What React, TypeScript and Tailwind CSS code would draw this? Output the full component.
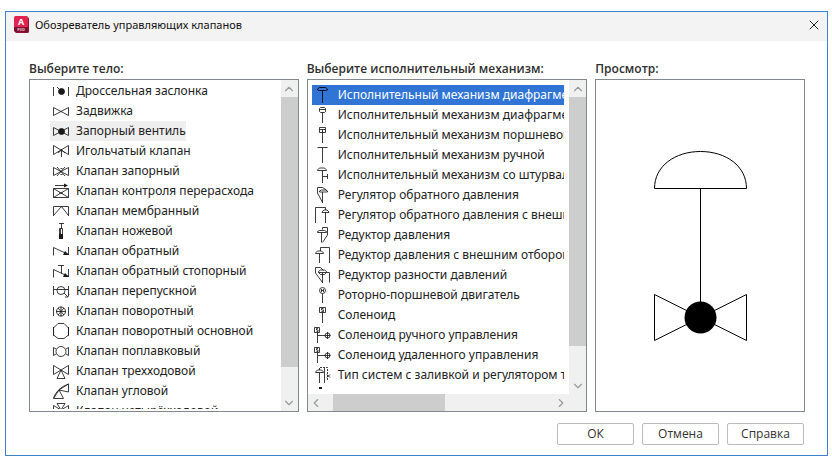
import { useState, type ReactNode } from "react";
import { ChevronDown, ChevronLeft, ChevronRight, ChevronUp, X } from "lucide-react";
import clsx from "clsx";

type Item = {
  label: string;
  icon: ReactNode;
};

const bodies: Item[] = [
  {
    label: "Дроссельная заслонка",
    icon: (
      <>
        <path d="M3.5 6v9M18.5 6v9M7 6l2 2" />
        <circle cx="11.5" cy="10.5" r="3" fill="currentColor" />
      </>
    ),
  },
  { label: "Задвижка", icon: <path d="M3.5 6.5v8l15-8v8z" /> },
  {
    label: "Запорный вентиль",
    icon: (
      <>
        <path d="M3.5 6.5v8l15-8v8z" />
        <circle cx="11.5" cy="10.5" r="3" fill="currentColor" />
      </>
    ),
  },
  {
    label: "Игольчатый клапан",
    icon: <path d="M3.5 4.5v9l15-9v9zM11.5 8v8M8 12l3.5-3 3.5 3" />,
  },
  {
    label: "Клапан запорный",
    icon: <path d="M3.5 6.5v8l15-8v8zM7 6l8 9M15 6l-8 9M10.5 7.5h2M10.5 13.5h2" />,
  },
  {
    label: "Клапан контроля перерасхода",
    icon: (
      <>
        <path d="M3.5 7.5h15v9h-15zM3.5 7.5l15 9M18.5 7.5l-15 9M5 4.5h11M9 12h4" />
        <path d="M14 2.5l4 2-4 2z" fill="currentColor" stroke="none" />
      </>
    ),
  },
  { label: "Клапан мембранный", icon: <path d="M3.5 15V5.5h15V15M3.5 14.5l8-9 7 9" /> },
  {
    label: "Клапан ножевой",
    icon: (
      <>
        <path d="M9 2.5h5M11.5 2.5V8M9.5 7.5h3v10h-3zM10.5 7.5v10" />
        <path d="M9 13h4v5H9z" fill="currentColor" stroke="none" />
      </>
    ),
  },
  {
    label: "Клапан обратный",
    icon: (
      <>
        <path d="M3.5 14.5v-8l15 7M18.5 6v8" />
        <path d="M15 10l4 4h-6z" fill="currentColor" stroke="none" />
      </>
    ),
  },
  {
    label: "Клапан обратный стопорный",
    icon: (
      <>
        <path d="M3.5 16.5v-8l15 7M18.5 8v8M8 4.5h6M11.5 4.5v8" />
        <path d="M15 12l4 4h-6z" fill="currentColor" stroke="none" />
      </>
    ),
  },
  {
    label: "Клапан перепускной",
    icon: (
      <>
        <path d="M3.5 5v9M18.5 5v9M3.5 8.5h15M14 12l3.5 3.5M15 16h3l1-3" />
        <circle cx="11" cy="9.5" r="4" />
      </>
    ),
  },
  {
    label: "Клапан поворотный",
    icon: (
      <>
        <path d="M3.5 6v9M18.5 6v9M6 10.5h10M11 5.5v10M8 7l6 7M14 7l-6 7" />
        <circle cx="11" cy="10.5" r="4.5" />
      </>
    ),
  },
  {
    label: "Клапан поворотный основной",
    icon: <path d="M3.5 6v9M18.5 6v9M8 2.5h6L18.5 7v7L14 17.5H8L3.5 14V7z" />,
  },
  {
    label: "Клапан поплавковый",
    icon: (
      <>
        <path d="M6 8L3.5 6.5v8L6 13M16 8l2.5-1.5v8L16 13" />
        <circle cx="11" cy="10.5" r="5" />
      </>
    ),
  },
  { label: "Клапан трехходовой", icon: <path d="M3.5 4.5v9l15-9v9zM11 9l4 8.5H7z" /> },
  {
    label: "Клапан угловой",
    icon: <path d="M9 9l4.5 8.5h-10L9 9l9.5-6v8zM3.5 17Q7 7 18.5 3" />,
  },
  {
    label: "Клапан четырёхходовой",
    icon: <path d="M3.5 4.5v9l15-9v9zM11 9l4 8.5H7zM11 9l4-6.5H7z" />,
  },
];

const actuators: Item[] = [
  {
    label: "Исполнительный механизм диафрагменный",
    icon: <path d="M5.5 5V4l2-1.5h6l2 1.5v1l-2 .5h-6zM10.5 5.5V18" />,
  },
  {
    label: "Исполнительный механизм диафрагменный двойной",
    icon: <path d="M7.5 3.5l1-1h4l1 1v3l-1 1h-4l-1-1zM7.5 4.5h6M10.5 7.5V18" />,
  },
  {
    label: "Исполнительный механизм поршневой",
    icon: <path d="M7.5 2.5h6v5h-6zM7.5 4.5h6M10.5 4.5V18" />,
  },
  { label: "Исполнительный механизм ручной", icon: <path d="M5.5 2.5h10M10.5 2.5V18" /> },
  {
    label: "Исполнительный механизм со штурвалом",
    icon: <path d="M5.5 5.5V5l2-2h5l2 2v.5zM10.5 5.5V18M10.5 11.5h5M15.5 9v5" />,
  },
  {
    label: "Регулятор обратного давления",
    icon: <path d="M10.5 17.5L5.5 8V2.5h5l4 2.5M7.5 7V6l2-1h4l2 1v1zM10.5 7v11" />,
  },
  {
    label: "Регулятор обратного давления с внешним отбором",
    icon: <path d="M3.5 18V2.5h10V5M10 7.5V7l2-2h3l2 2v.5zM13.5 7.5V18" />,
  },
  {
    label: "Редуктор давления",
    icon: <path d="M10.5 17.5l5-7.5V2.5h-5v2M5.5 7.5v-1l2-1h5l2 1v1zM9.5 7.5v10" />,
  },
  {
    label: "Редуктор давления с внешним отбором",
    icon: <path d="M17.5 18V2.5h-9V6M3.5 8.5V8l2-2h4l2 2v.5zM7.5 8.5V18" />,
  },
  {
    label: "Редуктор разности давлений",
    icon: (
      <path d="M10.5 17.5L3.5 8V2.5h5l3 3M6.5 7.5v-1l2-1.5h4l2 1.5v1zM10.5 7.5V18M6.5 7.5l2 2h4l2-2h3v10" />
    ),
  },
  {
    label: "Роторно-поршневой двигатель",
    icon: (
      <>
        <circle cx="10.5" cy="5.5" r="3" />
        <path d="M9.5 4v3M11.5 4v3M9 5.5h3M10.5 8.5V18" />
      </>
    ),
  },
  {
    label: "Соленоид",
    icon: <path d="M7.5 2.5h6v5h-6zM11.5 3.5h-2v1.5h2v1.5h-2M10.5 7.5V18" />,
  },
  {
    label: "Соленоид ручного управления",
    icon: (
      <>
        <path d="M2.5 2.5h5v5h-5zM6 3.5H4.5v1.5H6v1.5H4.5M5.5 7.5V18M5.5 10.5h13M15.5 7v7" />
        <circle cx="15.5" cy="10.5" r="2.5" />
      </>
    ),
  },
  {
    label: "Соленоид удаленного управления",
    icon: (
      <>
        <path d="M2.5 2.5h5v5h-5zM6 3.5H4.5v1.5H6v1.5H4.5M5.5 7.5V18M5.5 10.5h13M15.5 7v7" />
        <circle cx="15.5" cy="10.5" r="2.5" />
      </>
    ),
  },
  {
    label: "Тип систем с заливкой и регулятором температуры",
    icon: (
      <>
        <path d="M3.5 7.5V7l2-2h4l2 2v.5zM7.5 7.5V18M12.5 3v15" />
        <path d="M7.5 5V2.5h8V16" strokeDasharray="2 1" />
        <path d="M15 9.5l3 3M18 9.5l-3 3" />
      </>
    ),
  },
  { label: "", icon: <path d="M7 2h3v2H7z" fill="currentColor" stroke="none" /> },
];

type ListProps = {
  items: Item[];
  selected: number;
  onSelect: (index: number) => void;
  strong?: boolean;
};

function ItemList({ items, selected, onSelect, strong }: ListProps) {
  return (
    <ul className="min-w-0 flex-1 overflow-hidden">
      {items.map((item, i) => (
        <li key={i} className="flex h-5">
          <button
            type="button"
            aria-pressed={i === selected}
            aria-label={item.label || "Точка"}
            onClick={() => onSelect(i)}
            className={clsx(
              "flex h-5 items-center gap-1.5 overflow-hidden whitespace-nowrap text-left",
              strong && "w-full",
              i === selected && (strong ? "bg-[#3075d6]" : "bg-[#efefef]"),
            )}
          >
            <svg
              viewBox="0 0 20 20"
              className={clsx(
                "size-5 shrink-0",
                strong && i === selected ? "text-black" : "text-[#1a1a1a]",
              )}
              fill="none"
              stroke="currentColor"
              strokeWidth="0.85"
              aria-hidden
            >
              {item.icon}
            </svg>
            <span className={strong && i === selected ? "text-white" : "text-[#222]"}>
              {item.label}
            </span>
          </button>
        </li>
      ))}
    </ul>
  );
}

const arrow = "flex size-[17px] shrink-0 items-center justify-center text-[#9a9a9a]";

function VerticalBar({ thumb }: { thumb: string }) {
  return (
    <div className="flex w-[17px] shrink-0 flex-col bg-[#f0f0f0]">
      <button type="button" aria-label="Вверх" className={arrow}>
        <ChevronUp className="size-3.5" />
      </button>
      <div className="min-h-0 flex-1">
        <div className={clsx("bg-[#cdcdcd]", thumb)} />
      </div>
      <button type="button" aria-label="Вниз" className={arrow}>
        <ChevronDown className="size-3.5" />
      </button>
    </div>
  );
}

function HorizontalBar() {
  return (
    <div className="flex h-[17px] shrink-0 bg-[#f0f0f0] pr-[17px]">
      <button type="button" aria-label="Влево" className={arrow}>
        <ChevronLeft className="size-3.5" />
      </button>
      <div className="flex flex-1 pl-2">
        <div className="w-[51%] bg-[#cdcdcd]" />
      </div>
      <button type="button" aria-label="Вправо" className={arrow}>
        <ChevronRight className="size-3.5" />
      </button>
    </div>
  );
}

function Pane({ title, children }: { title: string; children: ReactNode }) {
  return (
    <section aria-label={title} className="min-w-0">
      <h2 className="mb-px h-5 pt-px whitespace-nowrap font-['Open_Sans','Noto_Sans',sans-serif] text-[12px] leading-5 font-semibold text-[#303030]">
        {title}
      </h2>
      <div className="flex h-[333px] flex-col overflow-hidden border border-[#828790] bg-white">
        {children}
      </div>
    </section>
  );
}

function AppLogo() {
  return (
    <svg viewBox="0 0 15 17" className="h-[17px] w-[15px]" aria-hidden>
      <rect width="14" height="16" rx="1.5" fill="#e0234f" />
      <path d="M14 1l1 1.5V16l-1 1H2l-1-1h13z" fill="#8d1233" />
      <path d="M0 11h14v5H1.5L0 14.5z" fill="#7a1030" />
      <text x="7" y="9" textAnchor="middle" fontSize="9" fontWeight="700" fill="#fff">
        A
      </text>
      <text x="7" y="15" textAnchor="middle" fontSize="4" fontWeight="700" fill="#f3c9d3">
        P3D
      </text>
    </svg>
  );
}

function ValvePreview() {
  return (
    <svg
      viewBox="-1 0 94 192"
      className="m-auto h-48 w-[94px]"
      fill="none"
      stroke="#000"
      strokeWidth="1"
      role="img"
      aria-label="Запорный вентиль"
    >
      <path d="M.5 38.5C.5 16 21 1.5 46.5 1.5S92.5 16 92.5 38.5z" />
      <path d="M46.5 38.5V152M.5 144.5v46l92-46v46z" />
      <circle cx="46.5" cy="167.5" r="16" fill="#000" stroke="none" />
    </svg>
  );
}

const footerButton =
  "h-[22px] w-[77px] rounded-xs border border-[#bcbcbc] bg-white font-['Open_Sans','Noto_Sans',sans-serif] text-[12px] leading-5 text-[#333]";

export default function App() {
  const [body, setBody] = useState(2);
  const [actuator, setActuator] = useState(0);

  return (
    <div className="bg-white pt-[11px] pr-1 pb-3 pl-[5px] font-['Noto_Sans',sans-serif] text-[12px] leading-5">
      <main className="border border-[#3f80cf] bg-white">
        <header className="flex h-[29px] items-center bg-[#f3f3f3] pr-[5px] pb-1 pl-2">
          <AppLogo />
          <h1 className="ml-1.5 flex-1 pt-px text-[11px] text-[#111]">
            Обозреватель управляющих клапанов
          </h1>
          <button type="button" aria-label="Закрыть" className="text-[#222]">
            <X className="size-4" strokeWidth={1.5} />
          </button>
        </header>

        <div className="grid grid-cols-[270fr_281fr_210fr] gap-2 pt-[17px] pr-[22px] pl-[23px]">
          <Pane title="Выберите тело:">
            <div className="flex min-h-0 flex-1">
              <div className="flex min-w-0 flex-1 pt-px pb-0.5 pl-5">
                <ItemList items={bodies} selected={body} onSelect={setBody} />
              </div>
              <VerticalBar thumb="h-[91%]" />
            </div>
          </Pane>

          <Pane title="Выберите исполнительный механизм:">
            <div className="flex min-h-0 flex-1">
              <div className="flex min-w-0 flex-1 py-[5px] pr-[5px] pl-1">
                <ItemList items={actuators} selected={actuator} onSelect={setActuator} strong />
              </div>
              <VerticalBar thumb="h-[89%]" />
            </div>
            <HorizontalBar />
          </Pane>

          <Pane title="Просмотр:">
            <ValvePreview />
          </Pane>
        </div>

        <footer className="flex justify-end gap-2 pt-[11px] pr-[23px] pb-2.5">
          <button type="button" className={footerButton}>
            ОК
          </button>
          <button type="button" className={footerButton}>
            Отмена
          </button>
          <button type="button" className={footerButton}>
            Справка
          </button>
        </footer>
      </main>
    </div>
  );
}
